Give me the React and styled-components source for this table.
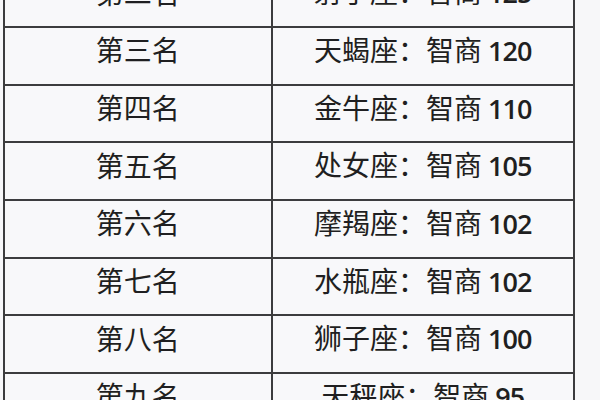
import React from "react";
import styled, { createGlobalStyle } from "styled-components";

const Global = createGlobalStyle`
  html, body { margin: 0; padding: 0; background: #f7f7f9; }
  #root { width: 600px; height: 400px; }
`;

const Page = styled.div`
  width: 600px;
  height: 400px;
  overflow: hidden;
  background: #f7f7f9;
  padding-left: 3px;
  box-sizing: border-box;
`;

const Table = styled.table`
  border-collapse: collapse;
  width: 572px;
  margin-top: -31.7px;
  table-layout: fixed;
  font-family: "Noto Sans CJK SC", "Noto Sans", sans-serif;
  color: #1f1f21;
  background: #f8f8fa;
`;

const Row = styled.tr`
  height: 57.7px;
`;

const Cell = styled.td`
  border: 2px solid #3c3c3e;
  text-align: center;
  vertical-align: middle;
  font-size: 28px;
  font-weight: 400;
  line-height: 1;
  padding: 0 0 13px 0;
  white-space: nowrap;
  width: ${(p) => p.$w || "auto"};
`;

const Num = styled.span`
  font-family: "Open Sans", "Noto Sans", sans-serif;
  font-size: 27px;
  font-weight: 600;
  letter-spacing: -1px;
  margin-left: 6px;
`;

const data = [
  ["第二名", "射手座", "125"],
  ["第三名", "天蝎座", "120"],
  ["第四名", "金牛座", "110"],
  ["第五名", "处女座", "105"],
  ["第六名", "摩羯座", "102"],
  ["第七名", "水瓶座", "102"],
  ["第八名", "狮子座", "100"],
  ["第九名", "天秤座", "95"],
];

export default function App() {
  return (
    <>
      <Global />
      <Page>
        <Table>
          <tbody>
            {data.map(([rank, sign, iq]) => (
              <Row key={rank}>
                <Cell $w="265.5px">{rank}</Cell>
                <Cell>
                  {sign}：智商<Num>{iq}</Num>
                </Cell>
              </Row>
            ))}
          </tbody>
        </Table>
      </Page>
    </>
  );
}
